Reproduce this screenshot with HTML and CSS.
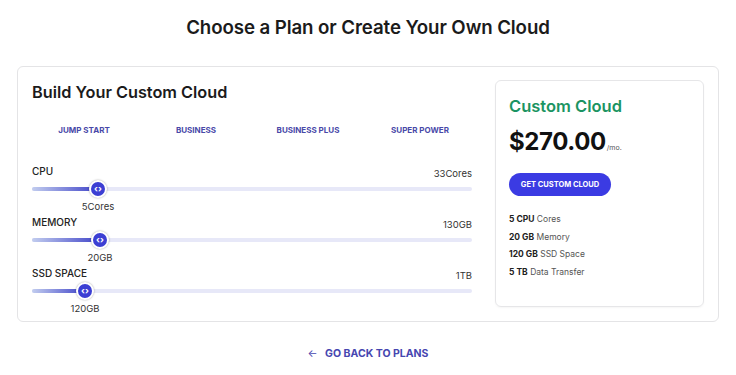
FILE: index.html
```html
<!DOCTYPE html>
<html lang="en">
<head>
    <meta charset="UTF-8">
    <meta name="viewport" content="width=device-width, initial-scale=1.0">
    <title>Choose a Plan or Create Your Own Cloud</title>
    <link rel="stylesheet" href="styles.css">
</head>
<body>
    <h1 class="page-title">Choose a Plan or Create Your Own Cloud</h1>
    <div class="builder">
        <div class="config">
            <h2 class="config-title">Build Your Custom Cloud</h2>
            <div class="presets">
                <button class="preset">JUMP START</button>
                <button class="preset">BUSINESS</button>
                <button class="preset">BUSINESS PLUS</button>
                <button class="preset">SUPER POWER</button>
            </div>

            <div class="slider-group">
                <div class="slider-head">
                    <span class="slider-label">CPU</span>
                    <span class="slider-max">33Cores</span>
                </div>
                <div class="slider">
                    <div class="track"></div>
                    <div class="fill" style="width: 66px"></div>
                    <div class="thumb" style="left: 66px"><span>&lsaquo;&rsaquo;</span></div>
                </div>
                <div class="slider-value" style="margin-left: 66px">5Cores</div>
            </div>

            <div class="slider-group">
                <div class="slider-head">
                    <span class="slider-label">MEMORY</span>
                    <span class="slider-max">130GB</span>
                </div>
                <div class="slider">
                    <div class="track"></div>
                    <div class="fill" style="width: 68px"></div>
                    <div class="thumb" style="left: 68px"><span>&lsaquo;&rsaquo;</span></div>
                </div>
                <div class="slider-value" style="margin-left: 68px">20GB</div>
            </div>

            <div class="slider-group">
                <div class="slider-head">
                    <span class="slider-label">SSD SPACE</span>
                    <span class="slider-max">1TB</span>
                </div>
                <div class="slider">
                    <div class="track"></div>
                    <div class="fill" style="width: 53px"></div>
                    <div class="thumb" style="left: 53px"><span>&lsaquo;&rsaquo;</span></div>
                </div>
                <div class="slider-value" style="margin-left: 53px">120GB</div>
            </div>
        </div>

        <div class="summary">
            <h3 class="summary-title">Custom Cloud</h3>
            <div class="price">$270.00<span class="per">/mo.</span></div>
            <button class="buy">GET CUSTOM CLOUD</button>
            <ul class="features">
                <li><b>5 CPU</b> Cores</li>
                <li><b>20 GB</b> Memory</li>
                <li><b>120 GB</b> SSD Space</li>
                <li><b>5 TB</b> Data Transfer</li>
            </ul>
        </div>
    </div>
    <a class="back" href="#"><span class="arrow">&larr;</span> GO BACK TO PLANS</a>
</body>
</html>
```

FILE: styles.css
```css
body {
    margin: 0;
    background-color: #ffffff;
    font-family: Inter, "Noto Sans", sans-serif;
    color: #222;
}

.page-title {
    margin: 0;
    padding-top: 16px;
    height: 66px;
    box-sizing: border-box;
    text-align: center;
    font-size: 18.7px;
    line-height: 24px;
    font-weight: 600;
    color: #1b1b1b;
    letter-spacing: -0.1px;
}

.builder {
    display: flex;
    gap: 23px;
    margin: 0 17px;
    height: 256px;
    padding: 13px 14px 0 14px;
    box-sizing: border-box;
    border: 1px solid #e4e4e6;
    border-radius: 6px;
    align-items: flex-start;
}

.config {
    width: 440px;
}

.config-title {
    margin: 1px 0 0;
    font-size: 16.3px;
    line-height: 22px;
    font-weight: 600;
    color: #1b1b1b;
}

.presets {
    display: grid;
    grid-template-columns: repeat(4, 1fr);
    margin: 17px -4px 0;
    height: 20px;
}

.preset {
    border: none;
    background: none;
    padding: 0;
    font-family: inherit;
    font-size: 8px;
    font-weight: 700;
    color: #4848a8;
    cursor: pointer;
}

.slider-group {
    margin-bottom: 1px;
}

.presets + .slider-group {
    margin-top: 24px;
}

.slider-head {
    display: flex;
    justify-content: space-between;
    height: 14px;
    line-height: 14px;
}

.slider-label {
    font-size: 10px;
    font-weight: 500;
    color: #222;
}

.slider-max {
    font-size: 9.5px;
    color: #333;
    padding-top: 3px;
}

.slider {
    position: relative;
    height: 22px;
}

.track {
    position: absolute;
    left: 0;
    right: 0;
    top: 9px;
    height: 4px;
    border-radius: 2px;
    background-color: #e7e8f8;
}

.fill {
    position: absolute;
    left: 0;
    top: 9px;
    height: 4px;
    border-radius: 2px;
    background: linear-gradient(to right, #c2cdef, #3f43c8);
}

.thumb {
    position: absolute;
    top: 2px;
    width: 14px;
    height: 14px;
    margin-left: -9px;
    border: 2px solid #ffffff;
    border-radius: 50%;
    background-color: #3c3fd3;
    box-shadow: 0 0 2px rgba(0, 0, 0, 0.35);
    display: flex;
    justify-content: center;
    align-items: center;
}

.thumb span {
    color: #fff;
    font-size: 9px;
    font-weight: 700;
    line-height: 9px;
    margin-top: -1px;
}

.slider-value {
    width: max-content;
    transform: translateX(-50%);
    height: 14px;
    line-height: 14px;
    font-size: 9.5px;
    color: #333;
}

.summary {
    width: 209px;
    height: 227px;
    box-sizing: border-box;
    border: 1px solid #e6e6e8;
    border-radius: 6px;
    padding: 14px 13px 0;
    box-shadow: 0 1px 2px rgba(0, 0, 0, 0.04);
}

.summary-title {
    margin: 0;
    font-size: 16.5px;
    line-height: 22px;
    font-weight: 600;
    color: #1b9462;
}

.price {
    margin-top: 9px;
    font-size: 24px;
    line-height: 32px;
    font-weight: 700;
    color: #111;
    letter-spacing: -0.4px;
}

.per {
    font-size: 7px;
    font-weight: 400;
    color: #555;
    letter-spacing: 0;
    margin-left: 1px;
}

.buy {
    display: block;
    margin-top: 9px;
    width: 102px;
    height: 23px;
    padding: 0;
    border: none;
    border-radius: 12px;
    background-color: #3b3be3;
    color: #fff;
    font-family: inherit;
    font-size: 7.5px;
    font-weight: 700;
    cursor: pointer;
}

.features {
    list-style: none;
    margin: 15px 0 0;
    padding: 0;
}

.features li {
    font-size: 8.5px;
    line-height: 17.6px;
    color: #555;
}

.features b {
    color: #222;
    font-weight: 700;
}

.back {
    display: block;
    margin-top: 25px;
    text-align: center;
    font-size: 10.5px;
    font-weight: 700;
    line-height: 14px;
    color: #4646b0;
    text-decoration: none;
}

.arrow {
    font-weight: 400;
    margin-right: 5px;
}
```
